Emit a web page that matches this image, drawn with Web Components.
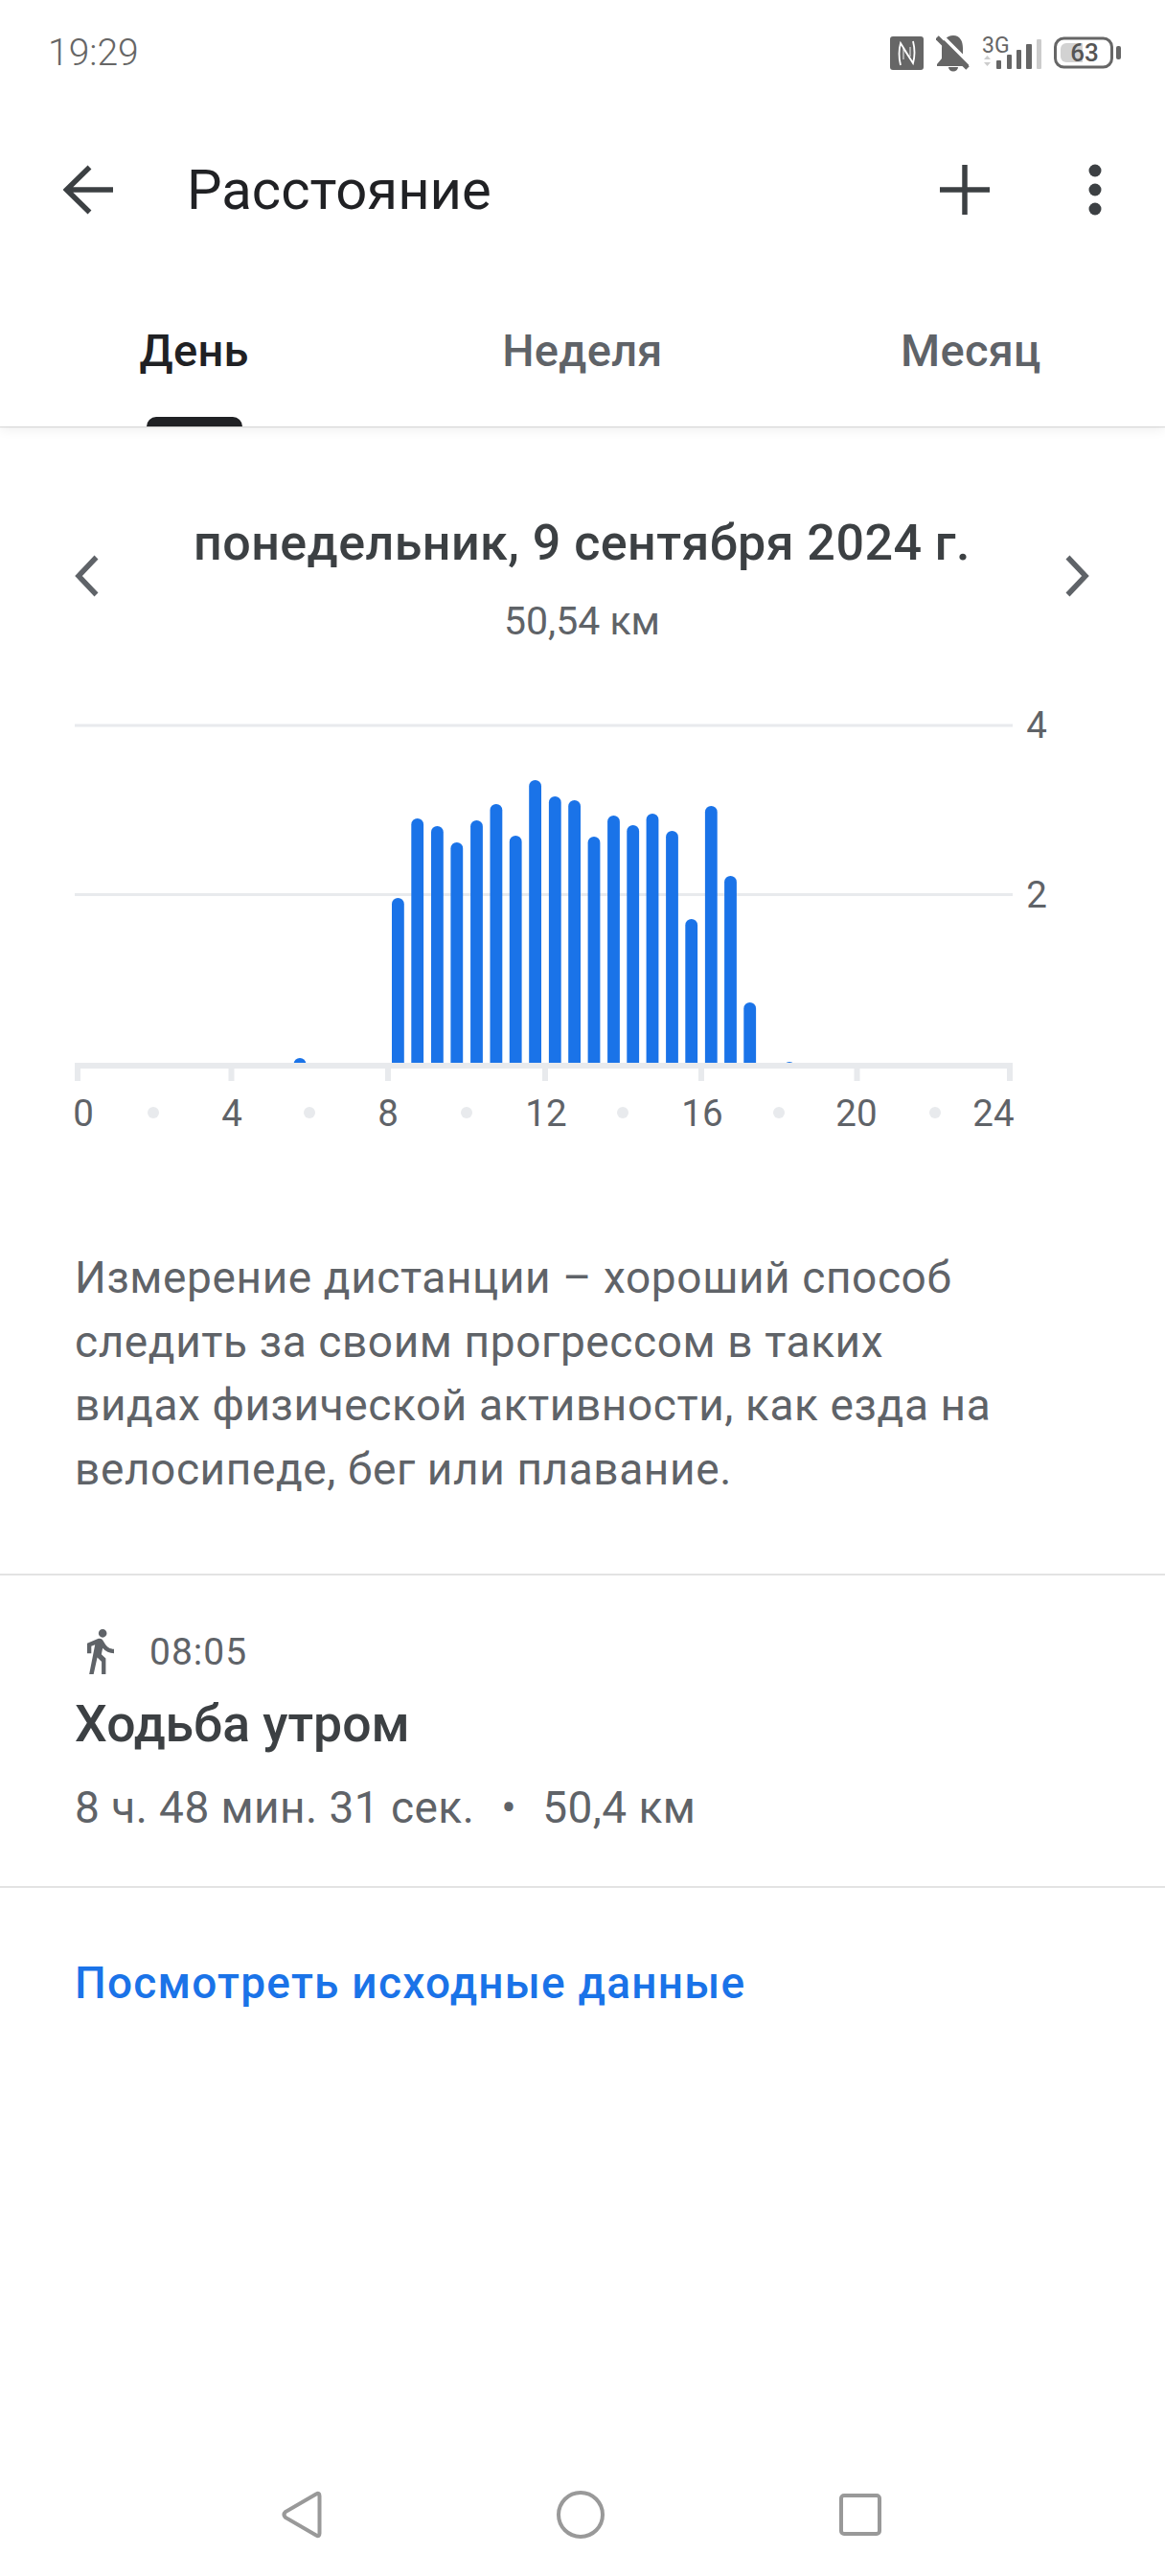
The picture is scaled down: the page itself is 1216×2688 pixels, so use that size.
<!DOCTYPE html>
<html lang="ru">
<head>
<meta charset="utf-8">
<title>Расстояние</title>
<style>
    html, body { margin: 0; background: #fff; }
    body { font-family: Roboto, "Liberation Sans", sans-serif; color: #5f6368; }
    #page { display: flex; flex-direction: column; width: 1216px; height: 2688px; overflow: hidden; }
    nav-bar { margin-top: auto; }
</style>
</head>
<body>
<div id="page">
    <status-bar time="19:29"></status-bar>
    <app-bar>Расстояние</app-bar>
    <tab-strip>
        <tab-item active>День</tab-item>
        <tab-item>Неделя</tab-item>
        <tab-item>Месяц</tab-item>
    </tab-strip>
    <date-header value="50,54 км">понедельник, 9 сентября 2024 г.</date-header>
    <distance-chart></distance-chart>
    <info-text>Измерение дистанции – хороший способ<br>следить за своим прогрессом в таких<br>видах физической активности, как езда на<br>велосипеде, бег или плавание.</info-text>
    <session-row time="08:05" title="Ходьба утром" details="8 ч. 48 мин. 31 сек.">50,4 км</session-row>
    <data-link>Посмотреть исходные данные</data-link>
    <nav-bar></nav-bar>
</div>

<script>
class StatusBar extends HTMLElement {
    constructor() {
        super();
        this.attachShadow({ mode: 'open' });
        this.shadowRoot.innerHTML = `
            <style>
                :host { display: flex; align-items: center; justify-content: space-between; box-sizing: border-box; height: 110px; padding: 0 46px 0 50px; }
                .time { font-size: 39px; font-weight: 300; color: #666; }
                .icons { display: flex; align-items: center; gap: 13px; }
                svg { display: block; }
            </style>
            <span class="time"></span>
            <div class="icons">
                <svg width="35" height="35" viewBox="0 0 35 35">
                    <rect width="35" height="35" rx="3" fill="#666"/>
                    <path d="M11 30Q8 18 11 7L24 28Q27 17 24 5" fill="none" stroke="#fff" stroke-width="1.800"/>
                    <path d="M14 24V13l8 12M21 11v10" fill="none" stroke="#fff" stroke-width="1.200" opacity=".75"/>
                </svg>
                <svg width="35" height="39" viewBox="0 0 35 39">
                    <path d="M18 1c7 0 10 6 10 13v10l6 7v2H1v-2l5-6V14C6 7 11 1 18 1z" fill="#666"/>
                    <path d="M13 34h10a5 4.500 0 0 1-10 0z" fill="#666"/>
                    <path d="M1 3l32 32" stroke="#666" stroke-width="5"/>
                    <path d="M6 1l30 30" stroke="#fff" stroke-width="3.500"/>
                </svg>
                <svg width="62" height="44" viewBox="0 -5 62 44">
                    <text x="0" y="17" font-family="Roboto" font-size="23" fill="#666">3G</text>
                    <path d="M2 24l3.500-4 3.500 4zM2 27l3.500 4 3.500-4z" fill="#ccc"/>
                    <rect x="15" y="25" width="5" height="9" rx="1" fill="#666"/>
                    <rect x="26" y="19" width="5" height="15" rx="1" fill="#666"/>
                    <rect x="36" y="14" width="5" height="20" rx="1" fill="#666"/>
                    <rect x="46" y="8" width="6" height="26" rx="1" fill="#666"/>
                    <rect x="57" y="3" width="5" height="31" rx="1" fill="#ccc"/>
                </svg>
                <svg width="70" height="34" viewBox="0 0 70 34">
                    <rect x="1.500" y="2" width="59" height="30" rx="9" fill="none" stroke="#666" stroke-width="3"/>
                    <path d="M13 7h17v20H13a6 6 0 0 1-6-6v-8a6 6 0 0 1 6-6z" fill="#d2d2d2"/>
                    <text x="32" y="26" text-anchor="middle" font-family="Roboto" font-weight="500" font-size="26" fill="#555">63</text>
                    <rect x="65" y="10" width="5" height="14" rx="2" fill="#666"/>
                </svg>
            </div>
        `;
    }

    connectedCallback() {
        this.shadowRoot.querySelector('.time').textContent = this.getAttribute('time');
    }
}

class AppBar extends HTMLElement {
    constructor() {
        super();
        this.attachShadow({ mode: 'open' });
        this.shadowRoot.innerHTML = `
            <style>
                :host { display: flex; align-items: center; box-sizing: border-box; height: 176px; padding: 0 66px 0 66px; }
                .title { flex: 1; margin-left: 77px; font-size: 58px; color: #202124; }
                .actions { display: flex; align-items: center; gap: 103px; }
                svg { display: block; }
            </style>
            <svg width="52" height="52" viewBox="0 0 52 52">
                <path d="M52 26H5M27.500 2.500L3.500 26l24 23.500" fill="none" stroke="#3c4043" stroke-width="5.500"/>
            </svg>
            <div class="title"><slot></slot></div>
            <div class="actions">
                <svg width="52" height="52" viewBox="0 0 52 52">
                    <path d="M26 0v52M0 26h52" fill="none" stroke="#3c4043" stroke-width="5.500"/>
                </svg>
                <svg width="14" height="54" viewBox="0 0 14 54">
                    <circle cx="7" cy="7" r="6.500" fill="#3c4043"/>
                    <circle cx="7" cy="27" r="6.500" fill="#3c4043"/>
                    <circle cx="7" cy="47" r="6.500" fill="#3c4043"/>
                </svg>
            </div>
        `;
    }
}

class TabStrip extends HTMLElement {
    constructor() {
        super();
        this.attachShadow({ mode: 'open' });
        this.shadowRoot.innerHTML = `
            <style>
                :host { display: grid; grid-template-columns: repeat(3, 1fr); height: 159px; position: relative; z-index: 1; background: #fff; box-shadow: 0 1px 1px rgba(0,0,0,.12), 0 3px 12px rgba(0,0,0,.07); clip-path: inset(0 0 -30px 0); }
            </style>
            <slot></slot>
        `;
    }
}

class TabItem extends HTMLElement {
    constructor() {
        super();
        this.attachShadow({ mode: 'open' });
        this.shadowRoot.innerHTML = `
            <style>
                :host { display: flex; flex-direction: column; align-items: center; justify-content: flex-end; font-size: 47px; font-weight: 500; letter-spacing: .3px; color: #5f6368; }
                :host([active]) { color: #202124; }
                .label { line-height: 60px; margin-bottom: 39px; }
                .bar { width: 100px; height: 10px; border-radius: 10px 10px 0 0; background: transparent; }
                :host([active]) .bar { background: #202124; }
            </style>
            <div class="label"><slot></slot></div>
            <div class="bar"></div>
        `;
    }
}

class DateHeader extends HTMLElement {
    constructor() {
        super();
        this.attachShadow({ mode: 'open' });
        this.shadowRoot.innerHTML = `
            <style>
                :host { display: flex; align-items: flex-start; justify-content: space-between; box-sizing: border-box; height: 275px; padding: 92px 78px 0 77px; }
                .center { display: flex; flex-direction: column; align-items: center; }
                .day { font-size: 52px; font-weight: 500; line-height: 60px; letter-spacing: .45px; color: #3c4043; }
                .value { margin-top: 29px; font-size: 41px; line-height: 44px; color: #5f6368; }
                svg { display: block; margin-top: 42px; }
            </style>
            <svg width="26" height="44" viewBox="0 0 26 44"><path d="M23.500 2.500L5 22l18.500 19.500" fill="none" stroke="#5f6368" stroke-width="5.500"/></svg>
            <div class="center">
                <div class="day"><slot></slot></div>
                <div class="value"></div>
            </div>
            <svg width="26" height="44" viewBox="0 0 26 44"><path d="M2.500 2.500L21 22 2.500 41.500" fill="none" stroke="#5f6368" stroke-width="5.500"/></svg>
        `;
    }

    connectedCallback() {
        this.shadowRoot.querySelector('.value').textContent = this.getAttribute('value');
    }
}

// [x centre, top of bar], page coordinates
const CHART_BARS = [
    [313, 1104], [415.4, 937], [435.7, 854], [456.4, 862], [476.8, 879], [497.5, 856],
    [517.9, 839], [538.2, 872], [558.6, 814], [579.3, 831], [599.6, 835], [620, 873],
    [640.5, 851], [660.7, 861], [681, 849], [701.5, 867], [721.7, 959], [742.3, 841],
    [762.5, 914], [782.700, 1046], [824, 1108]
];
const X_LABELS = [['0', 87], ['4', 242], ['8', 405], ['12', 570], ['16', 733], ['20', 894], ['24', 1037]];
const X_DOTS = [160, 323, 487, 650, 813, 976];
const X_TICKS = [81, 241.500, 405, 569, 732, 894.500, 1054];

class DistanceChart extends HTMLElement {
    constructor() {
        super();
        this.attachShadow({ mode: 'open' });
        const bars = CHART_BARS.map(([x, top]) =>
            `<rect x="${x - 6.4}" y="${top}" width="12.800" height="${1120 - top}" rx="6.400" fill="#1a73e8"/>`).join('');
        const ticks = X_TICKS.map(x => `<rect x="${x - 3}" y="1112" width="6" height="16" fill="#e8eaed"/>`).join('');
        const dots = X_DOTS.map(x => `<circle cx="${x}" cy="1161" r="6" fill="#e8eaed"/>`).join('');
        const labels = X_LABELS.map(([t, x]) => `<text x="${x}" y="1175" text-anchor="middle">${t}</text>`).join('');
        this.shadowRoot.innerHTML = `
            <style>
                :host { display: block; height: 470px; }
                svg { display: block; }
                text { font-family: Roboto, sans-serif; font-size: 38.500px; fill: #5f6368; }
            </style>
            <svg width="1216" height="470" viewBox="0 720 1216 470">
                <rect x="78" y="755.500" width="979" height="3" fill="#e8eaed"/>
                <rect x="78" y="932" width="979" height="3" fill="#e8eaed"/>
                ${bars}
                <rect x="78" y="1109" width="979" height="6" fill="#e8eaed"/>
                <rect x="78" y="1115" width="979" height="10" fill="#fff"/>
                ${ticks}
                ${dots}
                ${labels}
                <text x="1082" y="770" text-anchor="middle">4</text>
                <text x="1082" y="947" text-anchor="middle">2</text>
            </svg>
        `;
    }
}

class InfoText extends HTMLElement {
    constructor() {
        super();
        this.attachShadow({ mode: 'open' });
        this.shadowRoot.innerHTML = `
            <style>
                :host { display: block; box-sizing: border-box; height: 454px; padding: 110px 78px 0; border-bottom: 2px solid #e3e3e3; font-size: 46px; line-height: 66.500px; letter-spacing: .6px; color: #5f6368; }
            </style>
            <slot></slot>
        `;
    }
}

class SessionRow extends HTMLElement {
    constructor() {
        super();
        this.attachShadow({ mode: 'open' });
        this.shadowRoot.innerHTML = `
            <style>
                :host { display: block; box-sizing: border-box; height: 326px; padding: 56px 78px 0; border-bottom: 2px solid #e3e3e3; }
                .top { display: flex; align-items: center; height: 47px; padding-left: 13px; gap: 37px; font-size: 39px; letter-spacing: 1px; color: #5f6368; }
                .name { margin-top: 20px; font-size: 53.500px; font-weight: 500; line-height: 64px; color: #3c4043; }
                .meta { display: flex; margin-top: 27px; font-size: 46px; line-height: 56px; letter-spacing: .45px; color: #5f6368; }
                .sep { margin: 0 27px 0 28px; }
                svg { display: block; }
            </style>
            <div class="top">
                <svg width="28" height="47" viewBox="6 1.500 13 21.500" preserveAspectRatio="none">
                    <path fill="#5f6368" d="M13.500 5.500c1.100 0 2-.9 2-2s-.9-2-2-2-2 .9-2 2 .9 2 2 2zM9.800 8.900L7 23h2.100l1.800-8 2.100 2v6h2v-7.500l-2.100-2 .6-3C14.800 12 16.800 13 19 13v-2c-1.900 0-3.500-1-4.300-2.400l-1-1.600c-.4-.6-1-1-1.700-1-.3 0-.5.1-.8.1L6 8.300V13h2V9.600l1.800-.7"/>
                </svg>
                <span class="time"></span>
            </div>
            <div class="name"></div>
            <div class="meta"><span class="details"></span><span class="sep">•</span><span><slot></slot></span></div>
        `;
    }

    connectedCallback() {
        this.shadowRoot.querySelector('.time').textContent = this.getAttribute('time');
        this.shadowRoot.querySelector('.name').textContent = this.getAttribute('title');
        this.shadowRoot.querySelector('.details').textContent = this.getAttribute('details');
    }
}

class DataLink extends HTMLElement {
    constructor() {
        super();
        this.attachShadow({ mode: 'open' });
        this.shadowRoot.innerHTML = `
            <style>
                :host { display: block; padding: 71px 78px 0; font-size: 46px; font-weight: 500; line-height: 56px; letter-spacing: 1.250px; color: #1a73e8; }
            </style>
            <slot></slot>
        `;
    }
}

class NavBar extends HTMLElement {
    constructor() {
        super();
        this.attachShadow({ mode: 'open' });
        this.shadowRoot.innerHTML = `
            <style>
                :host { display: flex; align-items: center; justify-content: space-between; box-sizing: border-box; height: 50px; margin-bottom: 39px; padding: 0 296px 0 294px; }
                svg { display: block; }
            </style>
            <svg width="42" height="50" viewBox="0 0 42 50"><path d="M36 3.500q3.500-2 3.500 2v39q0 4-3.500 2L4 28q-3-3 0-6z" fill="none" stroke="#999" stroke-width="4"/></svg>
            <svg width="50" height="50" viewBox="0 0 50 50"><circle cx="25" cy="25" r="23" fill="none" stroke="#999" stroke-width="4"/></svg>
            <svg width="44" height="44" viewBox="0 0 44 44"><rect x="2" y="2" width="40" height="40" rx="3" fill="none" stroke="#999" stroke-width="4"/></svg>
        `;
    }
}

customElements.define('status-bar', StatusBar);
customElements.define('app-bar', AppBar);
customElements.define('tab-strip', TabStrip);
customElements.define('tab-item', TabItem);
customElements.define('date-header', DateHeader);
customElements.define('distance-chart', DistanceChart);
customElements.define('info-text', InfoText);
customElements.define('session-row', SessionRow);
customElements.define('data-link', DataLink);
customElements.define('nav-bar', NavBar);
</script>
</body>
</html>
